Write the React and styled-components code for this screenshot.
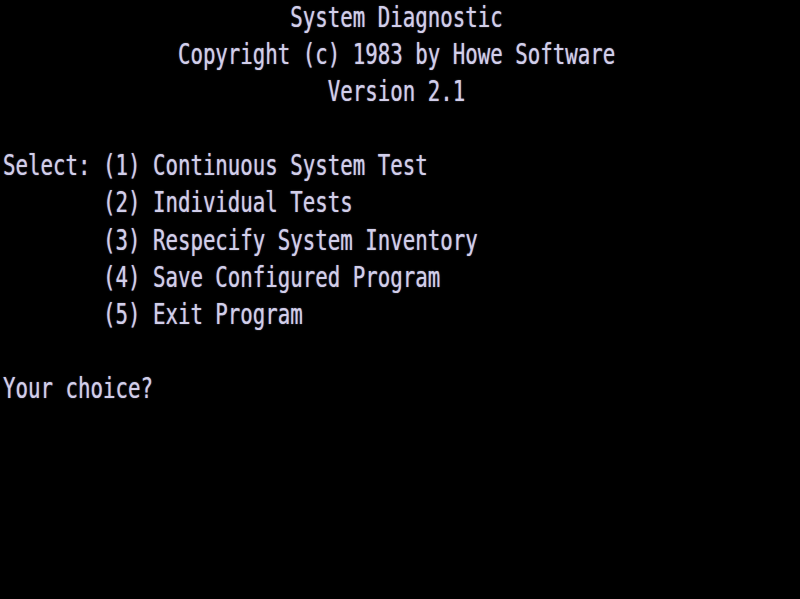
import React from 'react';
import styled, { createGlobalStyle } from 'styled-components';

const GlobalStyle = createGlobalStyle`
  html, body {
    margin: 0;
    padding: 0;
    background: #000;
  }
`;

// TRS-80 style screen: 64 columns x 16 rows
const lines = [
  '                       System Diagnostic',
  '              Copyright (c) 1983 by Howe Software',
  '                          Version 2.1',
  '',
  'Select: (1) Continuous System Test',
  '        (2) Individual Tests',
  '        (3) Respecify System Inventory',
  '        (4) Save Configured Program',
  '        (5) Exit Program',
  '',
  'Your choice?',
];

const Screen = styled.div`
  width: 800px;
  height: 599px;
  padding-left: 3px;
  box-sizing: border-box;
  background: #000;
  overflow: hidden;
  display: flex;
  flex-direction: column;
`;

const Row = styled.div`
  height: 37.1px;
  flex: none;
`;

const Text = styled.div`
  font-family: 'DejaVu Sans Mono', 'Liberation Mono', monospace;
  font-size: 20.76px;
  line-height: 1.17;
  color: #d2cfea;
  white-space: pre;
  transform: scaleY(1.4);
  transform-origin: top left;
  text-shadow: 0 0 1px rgba(200, 196, 235, 0.7);
`;

const App = () => (
  <>
    <GlobalStyle />
    <Screen>
      {lines.map((line, i) => (
        <Row key={i}>
          <Text>{line}</Text>
        </Row>
      ))}
    </Screen>
  </>
);

export default App;
